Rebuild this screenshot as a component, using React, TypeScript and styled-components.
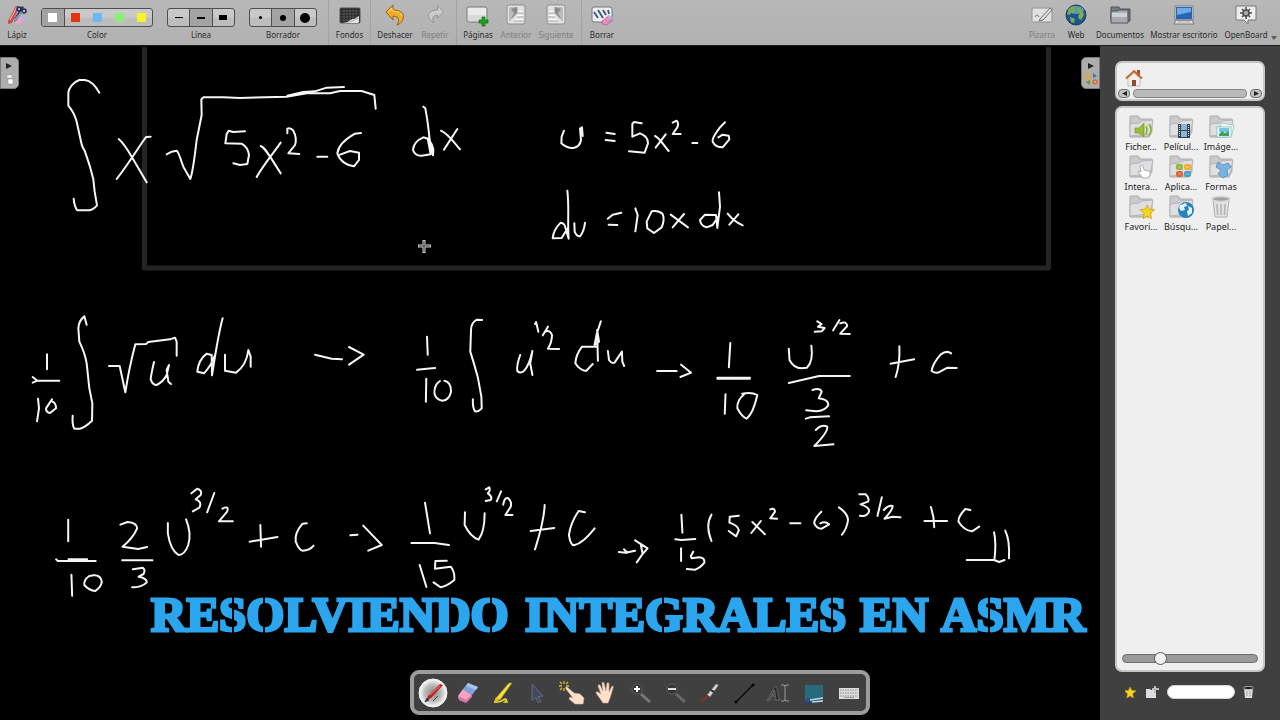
import React from "react";
import styled, { createGlobalStyle } from "styled-components";

const GlobalStyle = createGlobalStyle`
  *, *::before, *::after { box-sizing: border-box; }
  body { margin: 0; background: #000; font-family: "Noto Sans", "Open Sans", sans-serif; }
  button { font: inherit; color: inherit; border: 0; padding: 0; background: none; cursor: pointer; }
`;

const Page = styled.div`
  position: relative;
  min-height: 100vh;
  display: flex;
  flex-direction: column;
`;

/* ---------- top toolbar ---------- */

const Toolbar = styled.header`
  display: flex;
  height: 46px;
  background: linear-gradient(#b8b8b8, #b1b1b1);
  border-bottom: 1px solid #1c1c1c;
  color: #2b2b2b;
  font-size: 8px;
  line-height: 12px;
`;

const Tool = styled.button<{ $width: number }>`
  width: ${(p) => p.$width}px;
  display: flex;
  flex-direction: column;
  align-items: center;
  justify-content: flex-start;
  gap: 2px;
  padding-top: 3px;
  white-space: nowrap;

  &:disabled { color: #7f7f7f; cursor: default; }
  svg { display: block; flex: none; }
`;

const Choice = styled.fieldset<{ $width: number }>`
  width: ${(p) => p.$width}px;
  min-width: 0;
  margin: 0 7px;
  padding: 8px 0 0;
  border: 0;
  display: flex;
  flex-direction: column;
  align-items: center;
  gap: 2px;
`;

const Segments = styled.div`
  width: 100%;
  height: 19px;
  display: flex;
  overflow: hidden;
  border: 1px solid #4e4e4e;
  border-radius: 3px;
  background: linear-gradient(#c9c9c9 0 45%, #bdbdbd 55%);
`;

const Segment = styled.input<{ $w: number; $h: number; $fill: string; $round?: boolean }>`
  appearance: none;
  flex: 1;
  margin: 0;
  display: grid;
  place-items: center;
  border: solid #4e4e4e;
  border-width: 0;

  &:checked { background: #a3a3a3; border-width: 0 1px; }
  &:first-child { border-left-width: 0; }
  &::before {
    content: "";
    width: ${(p) => p.$w}px;
    height: ${(p) => p.$h}px;
    background: ${(p) => p.$fill};
    border-radius: ${(p) => (p.$round ? "50%" : "0")};
  }
`;

const Divider = styled.div<{ $before?: number }>`
  width: 1px;
  height: 45px;
  margin-left: ${(p) => p.$before ?? 0}px;
  background: #a3a3a3;
`;

const RightTools = styled.div`
  display: flex;
  margin-left: auto;
  padding-right: 2px;
`;

const MoreButton = styled.button`
  width: 8px;
  padding-top: 30px;
  svg { display: block; }
`;

/* ---------- workspace ---------- */

const Workspace = styled.div`
  flex: 1;
  display: flex;
`;

const Board = styled.main`
  position: relative;
  flex: 1;
  min-width: 0;
  background: #000;
`;

const BoardDrawing = styled.svg`
  display: block;
  width: 100%;
  height: auto;
`;

const BannerText = styled.text`
  font-family: "Liberation Serif", serif;
  font-weight: 700;
  font-size: 49px;
  fill: #2ba6ee;
  stroke: #2ba6ee;
  stroke-width: 3px;
`;

const PanelTab = styled.button<{ $side: "left" | "right" }>`
  position: absolute;
  top: 11px;
  ${(p) => p.$side}: 0;
  width: 19px;
  height: 32px;
  display: grid;
  place-items: center;
  background: #adadad;
  border: 1px solid #7c7c7c;
  border-radius: ${(p) => (p.$side === "left" ? "0 5px 5px 0" : "5px 0 0 5px")};
`;

const Library = styled.aside`
  width: 180px;
  flex: none;
  display: flex;
  flex-direction: column;
  gap: 5px;
  padding: 15px 15px 0;
  background: #404040;
`;

const Panel = styled.section`
  background: #efefef;
  border: 2px solid #c6c6c6;
  border-radius: 7px;
`;

const PathPanel = styled(Panel)`
  height: 40px;
  display: flex;
  flex-direction: column;
  justify-content: space-between;
`;

const HomeButton = styled.button`
  width: 18px;
  margin: 6px 0 0 8px;
  svg { display: block; }
`;

const ScrollRow = styled.div`
  display: flex;
  gap: 3px;
  padding: 0 1px 1px;
`;

const ScrollArrow = styled.button`
  width: 12px;
  height: 9px;
  display: grid;
  place-items: center;
  border: 1px solid #6f6f6f;
  border-radius: 4px;
  background: #c4c4c4;
`;

const ScrollThumb = styled.div`
  flex: 1;
  height: 9px;
  border: 1px solid #858585;
  border-radius: 4px;
  background: #bababa;
`;

const ItemsPanel = styled(Panel)`
  flex: 1;
  display: flex;
  flex-direction: column;
  justify-content: space-between;
`;

const FolderGrid = styled.div`
  display: grid;
  grid-template-columns: repeat(3, 40px);
  row-gap: 2px;
  padding: 7px 4px;
`;

const Folder = styled.button`
  display: flex;
  flex-direction: column;
  align-items: center;
  gap: 2px;
  color: #222;
  font-size: 9px;
  line-height: 12px;
  white-space: nowrap;
  svg { display: block; }
`;

const ZoomSlider = styled.input`
  appearance: none;
  height: 9px;
  margin: 0 5px 7px;
  border: 1px solid #6d6d6d;
  border-radius: 5px;
  background: #9a9a9a;

  &::-webkit-slider-thumb {
    appearance: none;
    width: 13px;
    height: 13px;
    border: 1px solid #555;
    border-radius: 50%;
    background: #f2f2f2;
  }
`;

const LibraryFooter = styled.footer`
  height: 43px;
  display: flex;
  align-items: center;
  gap: 8px;
  padding: 0 10px 14px;
  svg { display: block; }
`;

const SearchBox = styled.input`
  flex: 1;
  min-width: 0;
  height: 14px;
  padding: 0 6px;
  border: 1px solid #d2d2d2;
  border-radius: 7px;
  background: #fff;
  font-size: 9px;
`;

const Dock = styled.nav`
  position: absolute;
  left: 50%;
  bottom: 5px;
  transform: translateX(-50%);
  width: 460px;
  height: 45px;
  display: flex;
  padding-left: 2px;
  border: 4px solid #9c9c9c;
  border-radius: 9px;
  background: #404040;
`;

const DockButton = styled.button`
  flex: 1;
  display: grid;
  place-items: center;
`;

/* ---------- toolbar icons ---------- */

const Icon = ({ w = 24, h = 24, children }: { w?: number; h?: number; children: React.ReactNode }) => (
  <svg width={w} height={h} viewBox={`0 0 ${w} ${h}`} aria-hidden="true">
    {children}
  </svg>
);

const PencilsIcon = () => (
  <Icon>
    <path d="M9 16 17 3l2 1-7 13-3 2z" fill="#263c78" />
    <path d="M3 18 11 3l3 1-7 16-4 1z" fill="#d0474a" />
    <path d="M5 17 12 4" stroke="#f0c4c0" />
    <circle cx="14" cy="6" r="2" fill="none" stroke="#1d2b55" strokeWidth="1.5" />
    <circle cx="19" cy="8" r="2" fill="none" stroke="#1d2b55" strokeWidth="1.5" />
    <path d="M9 18 17 9" stroke="#8f98ad" strokeWidth="2" />
    <path d="m11 18 5-4 4 2-5 5-4-1z" fill="#e7a1cf" />
    <path d="m16 14 2-1 4 2-2 2z" fill="#a8b6ee" />
  </Icon>
);

const BackgroundIcon = () => (
  <Icon>
    <rect x="2" y="5" width="20" height="15" rx="1" fill="#252525" stroke="#555" />
    <path d="M3 8h18M3 11h18M3 14h18M3 17h10M6 6v13M9 6v13M12 6v13M15 6v10M18 6v8" stroke="#606060" strokeWidth=".7" />
    <path d="M4 20c7 0 8-4 11-4 2 0 4-2 6-3v6l-1 1z" fill="#e8e8e8" />
    <path d="M7 20c6-1 9-3 14-5" stroke="#aaa" fill="none" />
  </Icon>
);

const ArrowIcon = ({ redo = false }: { redo?: boolean }) => (
  <Icon>
    <path
      transform={redo ? "translate(23 1) scale(-.85 .85)" : undefined}
      d="M10 2v5c8 0 12 4 10 9-1 3-3 5-6 6 2-3 2-5 1-7-1-1-3-2-5-2v4L3 9z"
      fill={redo ? "#cbcbcb" : "#f3ab27"}
      stroke={redo ? "#8e8e8e" : "#98670d"}
      strokeLinejoin="round"
    />
    {!redo && <path d="M5 9l4-4v3c6 0 9 2 10 5" fill="none" stroke="#ffdc83" />}
  </Icon>
);

const PagesIcon = () => (
  <Icon>
    <rect x="1" y="4" width="20" height="15" rx="2" fill="#ebebeb" stroke="#777" />
    <path d="M2 12h18v4q0 2-2 2H4q-2 0-2-2z" fill="#dadada" />
    <path d="M16 14h3v3h3v3h-3v3h-3v-3h-3v-3h3z" fill="#1ca51c" stroke="#0b6f0b" strokeWidth=".7" />
  </Icon>
);

const StepIcon = ({ flip = false }: { flip?: boolean }) => (
  <Icon>
    <g transform={flip ? "translate(24 0) scale(-1 1)" : undefined}>
      <rect x="3" y="2" width="18" height="19" rx="2" fill="#e2e2e2" stroke="#8d8d8d" />
      <path d="M6 4h8v6l-9 9V5z" fill="#bcbcbc" />
      <path d="m7 6 6-2v6l-6 6 3-6z" fill="#8c8c8c" />
      <path d="M14 10h6M13 14h7M10 18h10" stroke="#b0b0b0" />
      <path d="M14 8h5v1h-5zM13 12h6v1h-6zM11 16h8v1h-8z" fill="#fff" />
    </g>
  </Icon>
);

const ClearIcon = () => (
  <Icon>
    <rect x="2" y="4" width="20" height="15" rx="2" fill="#eee" stroke="#777" />
    <path d="m4 9 4 6M8 7l5 8M13 7l3 5M18 7l1 4" fill="none" stroke="#35558a" strokeWidth="1.800" />
    <path d="m12 18 6-5 4 3-5 6-5-1z" fill="#e78bc0" stroke="#a85f8c" strokeWidth=".6" />
    <path d="m17 13 2-1 4 3-2 2z" fill="#c6a8dd" />
  </Icon>
);

const BoardIcon = () => (
  <Icon>
    <rect x="2" y="5" width="20" height="14" rx="1" fill="#e1e1e1" stroke="#929292" />
    <path d="m10 16 10-11 2 2-9 10-4 1zM5 14q2-4 4 0" fill="#ddd" stroke="#777" />
  </Icon>
);

const GlobeIcon = () => (
  <Icon>
    <circle cx="12" cy="12" r="10" fill="#1d5494" stroke="#243c58" />
    <ellipse cx="12" cy="7" rx="8" ry="4" fill="#7bb3db" opacity=".65" />
    <path d="M4 8q3-5 7-5l-1 3 2 1-3 3-2-1-1 3-3-1zm9-4 4 2 3 5-1 3-2 3-2-1-1-3 2-3-3-1 1-2-2-1zM6 14l5 2-1 4-3-1z" fill="#78b04c" />
  </Icon>
);

const DocumentsIcon = () => (
  <Icon>
    <path d="M3 4h8l1 2h10v12H3z" fill="#777b83" stroke="#50535a" />
    <path d="M3 8h7l1-1h9v13H3z" fill="#adb0b7" stroke="#51545a" />
    <path d="M4 10h15v4H4z" fill="#d0d1d6" />
    <path d="M4 14h15v5H4z" fill="#a8abb3" />
  </Icon>
);

const DesktopIcon = () => (
  <Icon>
    <path d="M3 3h18v14H3zM4 17h16l2 4H2z" fill="#eee" stroke="#777" />
    <rect x="4" y="4" width="16" height="12" fill="#2466b8" />
    <path d="M5 5h14v4L5 12z" fill="#70a9e4" />
    <path d="M5 19h14" stroke="#a5a5a5" />
  </Icon>
);

const OpenBoardIcon = () => (
  <Icon>
    <path d="M2 3h20v14h-8v4l-4-4H2z" fill="#eee" stroke="#777" strokeLinejoin="round" />
    <g stroke="#4b4b4b" strokeWidth="1.5">
      <circle cx="12" cy="10" r="3" fill="#aaa" />
      <path d="M12 4v3M12 13v3M6 10h3M15 10h3M8 6l2 2M14 12l2 2M16 6l-2 2M10 12l-2 2" />
    </g>
  </Icon>
);

/* ---------- library icons ---------- */

const Star = ({ x = 0, y = 0, s = 1 }: { x?: number; y?: number; s?: number }) => (
  <path
    transform={`translate(${x} ${y}) scale(${s})`}
    d="m6 0 2 4 5 .5-4 3.5 1 5-4-2.500-4 2.500 1-5-4-3.500L4 4z"
    fill="#fbd51d"
    stroke="#c79a0c"
    strokeWidth=".7"
  />
);

const TrashShape = () => (
  <g>
    <path d="m6 5 2 17h12l2-17z" fill="#e2e2e2" stroke="#b0b0b0" />
    <ellipse cx="14" cy="4" rx="9" ry="2.500" fill="#a2a2a2" stroke="#d8d8d8" strokeWidth="1.500" />
    <path d="m10 9 .6 11M14 9v11M18 9l-.6 11" stroke="#b2b2b2" strokeWidth="1.500" />
  </g>
);

const folderMarks: Record<string, React.ReactNode> = {
  audio: (
    <g>
      <path d="M8 13h4l5-5v14l-5-4H8z" fill="#9bbd38" stroke="#6d8d1d" strokeWidth=".6" />
      <path d="M19 11q2 4 0 8M22 9q4 6 0 12" fill="none" stroke="#8db12f" strokeWidth="1.600" />
    </g>
  ),
  video: (
    <g>
      <rect x="11" y="9" width="12" height="14" fill="#31404c" />
      <path d="M14 9h6v6h-6zM14 16h6v6h-6z" fill="#87b6d9" />
      <path d="M12.500 10v12M21.500 10v12" stroke="#dce6ec" strokeDasharray="1 1" />
    </g>
  ),
  image: (
    <g>
      <path d="m14 8 13 2-2 10-13-2z" fill="#eef8fb" stroke="#87b3c0" strokeWidth=".6" />
      <rect x="10" y="12" width="14" height="10" fill="#fff" stroke="#75aeba" strokeWidth=".7" />
      <path d="M12 13h10v4H12z" fill="#72c4e8" />
      <path d="m12 19 3-3 3 2 4-2v5H12z" fill="#3ca45f" />
    </g>
  ),
  hand: (
    <path d="M13 11q1-2 3 0l1 4 5 1q2 1 1 4l-2 3h-5l-5-6q0-2 3 0z" fill="#fff" stroke="#999" strokeWidth=".8" />
  ),
  apps: (
    <g>
      <rect x="9" y="9" width="7" height="6" rx="2" fill="#96b63d" />
      <rect x="17" y="9" width="7" height="6" rx="2" fill="#f0ac2b" />
      <rect x="9" y="16" width="7" height="6" rx="2" fill="#d96536" />
      <rect x="17" y="16" width="7" height="6" rx="2" fill="#44a2c9" />
      <path d="M11 12h3M19 12h3M11 19h3M19 19h3" stroke="#fff" opacity=".4" />
    </g>
  ),
  shapes: (
    <path d="m11 7 5 3 5-2 3 4-4 3 1 5-5 3-5-4 3-4-5-3z" fill="#78b4df" stroke="#4e8cba" strokeWidth=".8" />
  ),
  star: <Star x={14} y={10} s={1.05} />,
  web: (
    <g>
      <circle cx="19" cy="15" r="8" fill="#2783bd" />
      <path d="m13 10 6-2 1 3-3 1 1 3-4 1-2-3zm8 1 4 2v5l-4 3-1-5 2-1z" fill="#e5f4fa" />
    </g>
  ),
};

const FolderIcon = ({ mark }: { mark: string }) => (
  <Icon w={28} h={24}>
    {mark === "trash" ? (
      <TrashShape />
    ) : (
      <g>
        <path d="M3 2q0-1 1-1h7l2 3h12v12l-3 6H3z" fill="#cacacd" stroke="#aaaaad" />
        <path d="M3 21V9l9-1 3-2 11-1-3 14z" fill="#dfdfe2" stroke="#b6b6b9" />
        {folderMarks[mark]}
      </g>
    )}
  </Icon>
);

const HomeIcon = () => (
  <Icon w={18} h={18}>
    <path d="M3 9 9 4l6 5v8H3z" fill="#f4efe8" stroke="#aaa" strokeWidth=".7" />
    <path d="M12 1h3v6h-3z" fill="#a95024" />
    <path d="M1 9.500 9 2l8 7.500" fill="none" stroke="#c26a34" strokeWidth="2" />
    <path d="M7 11h4v6H7z" fill="#8b4f2d" />
  </Icon>
);

/* ---------- dock icons ---------- */

const dockIcons: { name: string; icon: React.ReactNode }[] = [
  {
    name: "Lápiz",
    icon: (
      <Icon w={30} h={30}>
        <defs>
          <radialGradient id="penGlow">
            <stop offset="0" stopColor="#8a8a8a" />
            <stop offset=".6" stopColor="#bcbcbc" />
            <stop offset="1" stopColor="#fff" />
          </radialGradient>
        </defs>
        <circle cx="15" cy="15" r="14" fill="url(#penGlow)" stroke="#eee" />
        <path d="m8 23 2-5L22 6l3 1-12 13z" fill="#bd2020" />
        <path d="m12 17 10-9" stroke="#ef8585" />
        <path d="m7 24 2-4 2 2zM15 23l5-5" stroke="#444" fill="#333" />
      </Icon>
    ),
  },
  {
    name: "Goma",
    icon: (
      <Icon>
        <path d="m2 15 5-7 9 6-6 7-7-2z" fill="#f4a3c5" />
        <path d="m7 8 5-6 10 4-6 8z" fill="#7ea2dc" />
        <path d="m12 2 10 4-2 3-10-4z" fill="#a8c1ee" />
        <path d="m2 15 8 4 6-5v2l-6 6-7-3z" fill="#e070a2" />
      </Icon>
    ),
  },
  {
    name: "Marcador",
    icon: (
      <Icon>
        <path d="m5 17 13-15h3L9 19z" fill="#f4e03b" stroke="#9d8b13" strokeWidth=".6" />
        <path d="m3 21 2-5 4 3z" fill="#e5c919" />
        <path d="M3 21q6 1 11-3 3 0 0 3l3 0" fill="none" stroke="#e8d02b" strokeWidth="1.700" />
      </Icon>
    ),
  },
  {
    name: "Seleccionar",
    icon: (
      <Icon>
        <path d="m7 3 11 12-5 .5 3 5-3 1-2-5-4 3z" fill="#3f4a5e" stroke="#626d80" />
      </Icon>
    ),
  },
  {
    name: "Interactuar",
    icon: (
      <Icon w={28} h={26}>
        <path d="m9 7 7 6 6 1 4 4-1 6h-8l-6-5 1-2 3 1-7-9q-1-3 1-2z" fill="#fde0ca" stroke="#d3ac92" strokeWidth=".6" />
        <path d="M6 1v3M6 8v3M1 6h3M8 6h3M2 2l2 2M10 2 8 4M2 10l2-2" stroke="#d6ba2c" strokeWidth="1.300" />
      </Icon>
    ),
  },
  {
    name: "Mano",
    icon: (
      <Icon>
        <path d="M7 19 2 12q0-2 2-1l3 2L4 5q0-2 2-1l3 6-1-8q1-2 2 0l2 8 1-8q2-1 2 1v8l3-6q2 0 1 2l-3 10-2 5H9z" fill="#fde0ca" stroke="#c9a58d" strokeWidth=".6" />
      </Icon>
    ),
  },
  {
    name: "Acercar",
    icon: (
      <Icon>
        <path d="m12 13 9 8" stroke="#77777b" strokeWidth="3" />
        <circle cx="8" cy="8" r="5" fill="#343434" stroke="#5d5d5d" />
        <path d="M5 8h6M8 5v6" stroke="#fff" strokeWidth="2" />
      </Icon>
    ),
  },
  {
    name: "Alejar",
    icon: (
      <Icon>
        <path d="m12 13 9 8" stroke="#68686c" strokeWidth="3" />
        <circle cx="8" cy="8" r="5" fill="#343434" stroke="#5d5d5d" />
        <path d="M4 8h8" stroke="#ddd" strokeWidth="2" />
      </Icon>
    ),
  },
  {
    name: "Puntero",
    icon: (
      <Icon>
        <path d="m9 14 9-11q3 0 2 2l-8 11z" fill="#d8d8dc" stroke="#69696d" strokeWidth=".6" />
        <path d="m13 9 3 2" stroke="#222" strokeWidth="2" />
        <path d="M2 21q4-6 7-7l3 2-4 2z" fill="#86312f" />
      </Icon>
    ),
  },
  {
    name: "Línea",
    icon: (
      <Icon>
        <path d="M3 21 20 4" stroke="#0c0c0c" strokeWidth="1.600" />
        <circle cx="3" cy="21" r="1.500" fill="#000" />
        <circle cx="20" cy="4" r="1.500" fill="#000" />
      </Icon>
    ),
  },
  {
    name: "Texto",
    icon: (
      <Icon>
        <text x="1" y="19" fontFamily="Liberation Serif, serif" fontStyle="italic" fontWeight="700" fontSize="19" fill="#262626" stroke="#8b8b8b" strokeWidth=".5">
          A
        </text>
        <path d="M14 4h3l1 1 1-1h3M18 5v14M14 20h3l1-1 1 1h3" fill="none" stroke="#9a9a9a" />
      </Icon>
    ),
  },
  {
    name: "Capturar",
    icon: (
      <Icon>
        <rect x="3" y="4" width="18" height="17" fill="#286a7a" />
        <path d="M3 18h18v3H3z" fill="#345a94" />
        <circle cx="6" cy="20" r="2" fill="none" stroke="#223d78" />
        <path d="m8 19 13-2M10 21l11-1" stroke="#b7d7e1" strokeWidth="1.500" />
      </Icon>
    ),
  },
  {
    name: "Teclado",
    icon: (
      <Icon>
        <rect x="2" y="7" width="20" height="11" fill="#ddd" />
        <path d="M3 9h18M3 12h18M3 15h18" stroke="#858585" strokeDasharray="1.500 1" />
        <path d="M7 16.500h10" stroke="#999" />
      </Icon>
    ),
  },
];

/* ---------- pen strokes on the board ---------- */

/* Each line of ink keeps its own origin and pen units per board pixel. */
type Ink = { x: number; y: number; unitsX: number; unitsY: number; label: string; strokes: string[] };

const inks: Ink[] = [
  {
    x: 40, y: 60, unitsX: 3, unitsY: 3, label: "∫ x √(5x² − 6) dx",
    strokes: [
      "M178 98C165 75 150 62 135 60H118C100 66 86 84 85 98V137C100 155 106 170 110 185L122 240Q126 262 134 272L150 320 160 358 164 395 171 436Q160 450 145 451H112Q103 440 101 416",
      "M236 237C250 248 262 268 275 290L320 367M332 230L318 231C300 255 270 305 230 357",
      "M380 283L395 275 410 272C418 280 422 300 430 320L451 357C460 330 464 290 470 240L485 165 484 118 490 112H550L600 114 740 110 800 100 870 100 900 93H965L1003 105 1007 146",
      "M742 107L790 96 825 94 860 83 912 81M760 103L820 97",
      "M615 214L580 216 566 212 560 222 556 250 605 251Q624 262 627 285L622 312 600 315 580 310",
      "M662 258C675 262 690 290 722 340M722 248C700 280 670 315 650 351",
      "M742 220V206Q752 202 760 212 772 235 765 255L745 280 778 282",
      "M832 290H862",
      "M963 219L945 221C920 235 895 255 892 280 900 305 925 318 942 319L957 300V278L930 273 900 284",
      "M1150 140L1156 145C1165 190 1165 210 1170 245L1179 286 1180 268Q1172 235 1150 232 1120 245 1119 270 1125 288 1145 287L1172 283 1163 235",
      "M1203 212C1225 222 1240 245 1260 268M1252 207L1212 269",
    ],
  },
  {
    x: 530, y: 90, unitsX: 3, unitsY: 3, label: "u = 5x² − 6, du = 10x dx",
    strokes: [
      "M102 122L95 140 94 160Q110 175 130 174 150 170 153 150L150 116 156 112 158 138",
      "M229 128L254 132M227 150L254 153",
      "M335 100L312 96 307 102V140L330 130Q355 140 354 160L344 188 297 184",
      "M375 138C390 145 400 165 416 183M407 133L377 173",
      "M428 98L440 92Q447 100 442 112L428 132H452M487 159H502",
      "M585 97C565 115 545 145 548 155Q555 172 578 172L598 148 596 137 578 134 565 142",
      "M112 302C118 350 112 400 116 446L108 420Q105 398 92 398 70 420 68 445L95 444 113 415",
      "M133 400L134 425Q140 440 150 439 162 425 165 398",
      "M233 386L248 374 274 368M236 404L262 405",
      "M316 355L323 375 316 424M365 364L350 395 352 415 372 429 395 412Q405 390 398 372 385 360 365 364",
      "M422 374L474 412M462 372L428 412",
      "M567 307L570 350 562 414 558 375 525 374 510 390Q512 408 530 412L548 405 565 380",
      "M593 371Q612 395 638 406M625 373L598 404",
    ],
  },
  {
    x: 20, y: 300, unitsX: 3, unitsY: 3, label: "1/10 ∫ √u du →",
    strokes: [
      "M81 163V208M38 231L52 242 38 248M52 242H118M54 296L57 325 51 364M96 298L78 325Q78 338 90 339L108 325Q108 308 96 304",
      "M200 74L193 49Q176 62 175 85L178 125Q195 160 200 190L208 265 217 310 216 362Q195 382 180 386H163Q156 375 158 347",
      "M267 198H299L316 277Q328 200 346 133L378 132 385 126 450 118 465 113 470 125V167",
      "M402 186Q393 225 392 238 398 255 410 255 430 245 440 225L447 195 440 210 445 245 453 252",
      "M608 55C595 100 585 170 576 226L575 165 560 161Q535 180 532 215L552 220Q575 195 585 165",
      "M615 164V212L648 218Q680 195 685 150L692 170V200",
      "M885 164L935 176 966 178M987 141L1031 164 987 194",
    ],
  },
  {
    x: 400, y: 300, unitsX: 2.7034, unitsY: 3, label: "1/10 ∫ u^(1/2) du → 1/10 u^(3/2) / (3/2) + C",
    strokes: [
      "M73 110L75 164M46 209L72 206 95 204M71 236L70 305M108 243Q92 255 93 280 97 300 115 302 133 300 138 275 138 245 120 242",
      "M222 60L208 59Q192 68 192 90L190 155Q200 190 210 230L220 290 221 325Q212 336 203 334 196 325 197 298",
      "M325 165Q315 195 317 213 325 222 335 213 350 195 358 153L352 190 358 225",
      "M368 66L374 95M365 72L368 66M400 80L386 106M392 95Q405 88 411 105 410 130 400 146L430 147",
      "M543 64Q530 100 526 135L538 125 533 90 535 182M532 140H492Q475 165 474 190 485 210 503 213L521 192",
      "M562 153L565 180Q572 192 580 188L600 155 601 185 606 198",
      "M695 213H748M760 194L787 218 758 231",
      "M893 129L889 202M858 233H946M858 236H946M880 283L878 341M932 281Q910 300 912 325 925 352 937 356 955 340 966 285 950 275 925 281",
      "M1051 146L1053 180Q1065 205 1085 205L1100 203Q1118 185 1112 137",
      "M1128 64L1140 72 1130 80 1148 84 1140 94 1121 95M1188 60L1171 91M1190 70Q1207 62 1209 78L1190 101 1216 102",
      "M1051 249L1133 228H1216",
      "M1115 270Q1135 262 1140 275L1132 295Q1158 298 1158 315 1150 332 1125 334L1098 331M1097 356L1108 352 1160 349",
      "M1124 390Q1140 372 1155 380 1158 395 1120 438L1172 433",
      "M1350 139Q1352 190 1340 231M1326 191L1390 178",
      "M1490 160Q1478 150 1462 163 1440 190 1437 213 1450 222 1460 215L1480 203 1505 204",
    ],
  },
  {
    x: 40, y: 470, unitsX: 2.8, unitsY: 3, label: "1/10 · 2/3 u^(3/2) + C → 1/15 u^(3/2) + C",
    strokes: [
      "M79 149V214M45 268L50 273H156M80 268H132M88 314L90 377M138 318Q122 330 124 345 138 362 155 363 172 350 173 335 170 315 150 316L138 318",
      "M225 164L245 156Q272 158 272 175 260 205 231 230L275 237 300 231M230 271H315",
      "M260 298L288 293Q296 300 290 312L276 320Q300 325 299 337 285 352 258 352",
      "M358 159V190Q365 240 388 255 405 255 415 225 425 190 409 148",
      "M424 70L440 56Q455 60 450 75L436 88Q455 95 446 113L428 124M488 69L468 127M511 116Q530 105 524 125L501 154H540",
      "M617 165L619 230M587 215L665 201",
      "M747 160L735 161Q712 190 716 215 725 240 735 242 755 242 766 227",
      "M869 196L889 194M905 167L957 225 919 242",
      "M1078 98L1092 190M1040 219H1105L1145 225M1063 285L1082 351M1139 272L1107 273 1106 296 1150 290Q1162 305 1160 330 1140 348 1122 352L1102 337",
      "M1190 127L1189 165Q1205 200 1228 209 1245 185 1245 130",
      "M1248 58L1258 52Q1262 62 1254 70 1268 80 1262 90L1248 93M1291 64L1279 94M1297 104Q1300 82 1310 84 1322 95 1318 110L1303 135H1323",
      "M1413 105Q1412 150 1386 238M1374 183L1440 174",
      "M1526 127L1508 123Q1485 160 1481 195 1485 225 1495 226 1520 220 1553 175",
    ],
  },
  {
    x: 580, y: 470, unitsX: 2.9585, unitsY: 3, label: "→ 1/15 (5x² − 6)^(3/2) + C",
    strokes: [
      "M115 246L135 248 163 242M130 238L140 248M163 211L200 235 185 252 168 277M180 225L185 250",
      "M300 134L303 188M282 208L300 210 341 207M299 235V273M335 245L328 258 330 265 352 262Q370 262 368 278 355 295 340 299L316 297",
      "M389 134Q370 165 389 213",
      "M470 137L443 140 442 158Q465 165 470 180L462 199 440 183",
      "M510 156L547 193M535 153L507 189M563 118Q575 112 577 125L563 145 583 146",
      "M622 160H652M714 125Q693 145 693 160 700 176 715 176L737 163Q725 152 711 160",
      "M766 112Q792 130 793 150 790 175 775 194",
      "M826 73L845 73Q858 85 852 95L830 103Q858 112 855 125 848 142 828 137",
      "M893 82L880 138M899 120Q912 105 925 108 925 120 901 146L925 140 948 142",
      "M1038 111Q1048 140 1048 172M1019 153H1086",
      "M1155 120L1140 117Q1118 140 1120 155 1135 180 1160 184L1181 170",
      "M1144 270H1225L1240 276 1256 270M1225 187Q1232 220 1226 270M1258 182Q1272 210 1269 265",
    ],
  },
];

const InkLine = ({ x, y, unitsX, unitsY, label, strokes }: Ink) => (
  <g
    role="img"
    aria-label={label}
    transform={`translate(${x} ${y}) scale(${1 / unitsX} ${1 / unitsY})`}
    fill="none"
    stroke="#f6f6f6"
    strokeWidth="2"
    strokeLinecap="round"
    strokeLinejoin="round"
  >
    {strokes.map((d) => (
      <path key={d} d={d} vectorEffect="non-scaling-stroke" />
    ))}
  </g>
);

const colors = [
  { name: "Blanco", value: "#ffffff" },
  { name: "Rojo", value: "#e23512" },
  { name: "Azul", value: "#6cb9f0" },
  { name: "Verde", value: "#88ee74" },
  { name: "Amarillo", value: "#fbf32a" },
];
const lines = [
  { name: "Fina", w: 8, h: 1 },
  { name: "Media", w: 8, h: 2 },
  { name: "Gruesa", w: 8, h: 5 },
];
const erasers = [
  { name: "Pequeño", size: 3 },
  { name: "Mediano", size: 6 },
  { name: "Grande", size: 10 },
];
const folders = [
  ["Ficher...", "audio"],
  ["Películ...", "video"],
  ["Imáge...", "image"],
  ["Intera...", "hand"],
  ["Aplica...", "apps"],
  ["Formas", "shapes"],
  ["Favori...", "star"],
  ["Búsqu...", "web"],
  ["Papel...", "trash"],
];

/* Stencil bridges cut through the round letters of the banner. */
const stencilCuts = [233, 264, 450, 491, 663, 832, 989];

export default function App() {
  return (
    <Page>
      <GlobalStyle />
      <Toolbar>
        <Tool $width={34}><PencilsIcon />Lápiz</Tool>
        <Choice $width={112}>
          <Segments>
            {colors.map((c, i) => (
              <Segment key={c.name} type="radio" name="color" aria-label={c.name} defaultChecked={i === 0} $w={9} $h={9} $fill={c.value} />
            ))}
          </Segments>
          <span>Color</span>
        </Choice>
        <Choice $width={68}>
          <Segments>
            {lines.map((l, i) => (
              <Segment key={l.name} type="radio" name="line" aria-label={l.name} defaultChecked={i === 1} $w={l.w} $h={l.h} $fill="#000" />
            ))}
          </Segments>
          <span>Línea</span>
        </Choice>
        <Choice $width={68}>
          <Segments>
            {erasers.map((e, i) => (
              <Segment key={e.name} type="radio" name="eraser" aria-label={e.name} defaultChecked={i === 1} $w={e.size} $h={e.size} $fill="#000" $round />
            ))}
          </Segments>
          <span>Borrador</span>
        </Choice>
        <Divider $before={4} />
        <Tool $width={41}><BackgroundIcon />Fondos</Tool>
        <Divider />
        <Tool $width={48}><ArrowIcon />Deshacer</Tool>
        <Tool $width={32} disabled><ArrowIcon redo />Repetir</Tool>
        <Divider $before={5} />
        <Tool $width={42}><PagesIcon />Páginas</Tool>
        <Tool $width={34} disabled><StepIcon />Anterior</Tool>
        <Tool $width={46} disabled><StepIcon flip />Siguiente</Tool>
        <Divider $before={2} />
        <Tool $width={40}><ClearIcon />Borrar</Tool>
        <RightTools>
          <Tool $width={32} disabled><BoardIcon />Pizarra</Tool>
          <Tool $width={36}><GlobeIcon />Web</Tool>
          <Tool $width={52}><DocumentsIcon />Documentos</Tool>
          <Tool $width={76}><DesktopIcon />Mostrar escritorio</Tool>
          <Tool $width={48}><OpenBoardIcon />OpenBoard</Tool>
          <MoreButton aria-label="Más">
            <Icon w={8} h={6}><path d="M1 1h6L4 5z" fill="#5c5c5c" /></Icon>
          </MoreButton>
        </RightTools>
      </Toolbar>

      <Workspace>
        <Board>
          <BoardDrawing viewBox="0 46 1100 674">
            <path d="M144.500 47V268H1048.500V47" fill="none" stroke="#242424" strokeWidth="5" strokeLinejoin="round" />
            {inks.map((ink) => (
              <InkLine key={ink.label} {...ink} />
            ))}
            <path d="M424 240v13M418 246h13" stroke="#ccc" strokeWidth="3" />
            <path d="M424 241v11M419 246h11" stroke="#333" />
            <BannerText y="631">
              <tspan x="151">RESOLVIENDO </tspan>
              <tspan x="525">INTEGRALES </tspan>
              <tspan x="860">EN </tspan>
              <tspan x="941">ASMR</tspan>
            </BannerText>
            {stencilCuts.map((x) => (
              <path key={x} d={`M${x} 594v42`} stroke="#000" strokeWidth="2" />
            ))}
          </BoardDrawing>
          <PanelTab $side="left" aria-label="Abrir páginas">
            <Icon w={17} h={28}>
              <path d="m5 4 6 3-6 3z" fill="#222" />
              <path d="M6 16h5v3H6zM7 20h5v5H7z" fill="#fff" stroke="#888" strokeWidth=".5" />
            </Icon>
          </PanelTab>
          <PanelTab $side="right" aria-label="Cerrar biblioteca">
            <Icon w={17} h={28}>
              <path d="m6 4 6 3-6 3z" fill="#222" />
              <rect x="4" y="15" width="4" height="4" fill="none" stroke="#eda52c" strokeWidth="1.500" />
              <path d="m11 14 4 3-4 2z" fill="#2a7fa7" />
              <path d="M8 21v5l-4-3z" fill="#5f9c38" />
              <circle cx="13" cy="23" r="2" fill="none" stroke="#e66b28" strokeWidth="1.500" />
            </Icon>
          </PanelTab>
        </Board>

        <Library>
          <PathPanel>
            <HomeButton aria-label="Inicio"><HomeIcon /></HomeButton>
            <ScrollRow>
              <ScrollArrow aria-label="Izquierda"><Icon w={5} h={5}><path d="M5 0v5L0 2.500z" fill="#222" /></Icon></ScrollArrow>
              <ScrollThumb />
              <ScrollArrow aria-label="Derecha"><Icon w={5} h={5}><path d="M0 0v5l5-2.500z" fill="#222" /></Icon></ScrollArrow>
            </ScrollRow>
          </PathPanel>
          <ItemsPanel>
            <FolderGrid>
              {folders.map(([name, mark]) => (
                <Folder key={name}><FolderIcon mark={mark} />{name}</Folder>
              ))}
            </FolderGrid>
            <ZoomSlider type="range" aria-label="Tamaño de los iconos" min={0} max={100} defaultValue={26} />
          </ItemsPanel>
          <LibraryFooter>
            <button aria-label="Favoritos"><Icon w={12} h={12}><Star s={0.85} y={1} /></Icon></button>
            <button aria-label="Nueva carpeta">
              <Icon w={14} h={14}>
                <path d="M1 4h4l1 1h5v8H1z" fill="#ddd" />
                <path d="M10 1v7M7 4h7" stroke="#bbb" strokeWidth="2" />
              </Icon>
            </button>
            <SearchBox type="search" aria-label="Buscar" />
            <button aria-label="Eliminar">
              <Icon w={12} h={14}>
                <path d="m1 3 1 10h7l1-10z" fill="#ddd" />
                <ellipse cx="5.500" cy="3" rx="5" ry="1.500" fill="#111" stroke="#eee" strokeWidth=".7" />
                <path d="M4 6v5M7 6v5" stroke="#aaa" />
              </Icon>
            </button>
          </LibraryFooter>
        </Library>
      </Workspace>

      <Dock aria-label="Herramientas">
        {dockIcons.map((d) => (
          <DockButton key={d.name} aria-label={d.name}>{d.icon}</DockButton>
        ))}
      </Dock>
    </Page>
  );
}
